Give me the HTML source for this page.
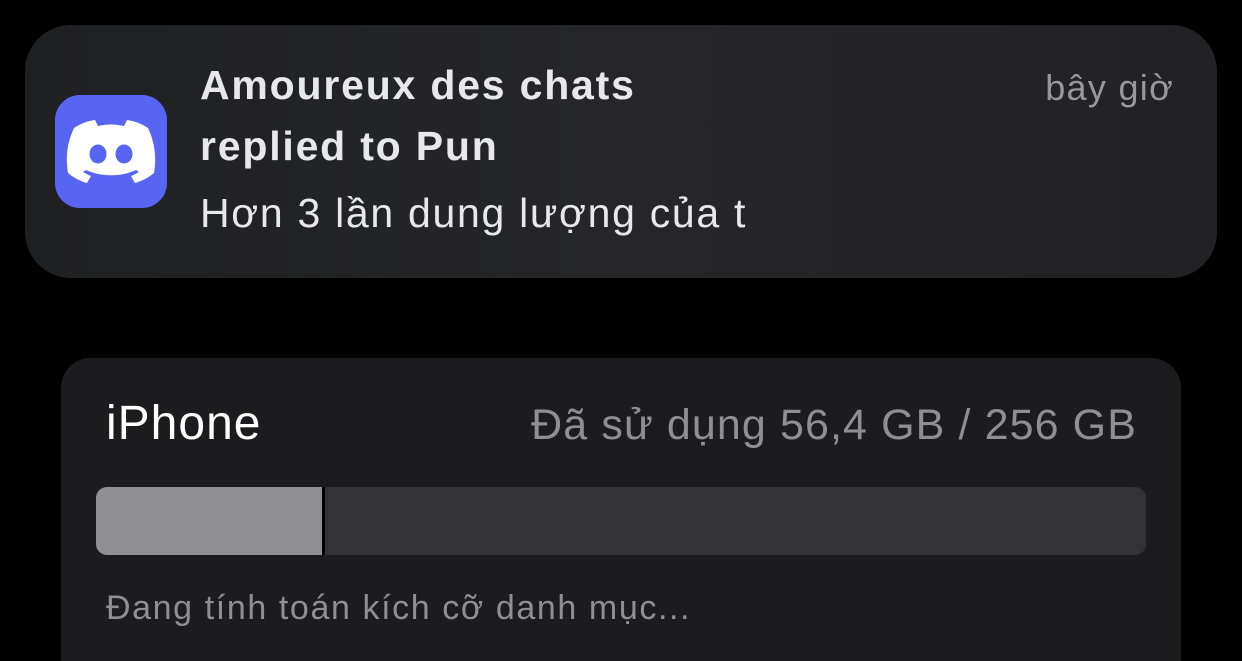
<!DOCTYPE html>
<html style="overflow:hidden"><head><meta charset="utf-8"><style>
html,body{height:661px}
body{margin:0;width:1242px;background:#000;overflow:hidden;font-family:"Liberation Sans",sans-serif;position:relative}
.n{position:absolute;left:25px;top:25px;width:1192px;height:253px;border-radius:46px;background:linear-gradient(90deg,#1f2022,#262628 50%,#222224)}
.ic{position:absolute;left:55px;top:95px;width:112px;height:113px;border-radius:25px;background:#5865f2}
.t{position:absolute;left:200px;color:#e8e8ea;white-space:nowrap}
.s{position:absolute;left:61px;top:358px;width:1120px;height:303px;border-radius:30px 30px 0 0;background:#1c1c1e}
.bar{position:absolute;left:96px;top:487px;width:1050px;height:68px;border-radius:11px;background:#333335;overflow:hidden}
</style></head><body>
<div class="n"></div>
<div class="ic"><svg width="112" height="113" viewBox="0 0 112 113"><path fill="#fff" d="M40 25 C32 26 25 29 19 33 C13 46 10 60 13 78 C19 83 25 86 32 88 L36 81 C33 80 30 78 28 77 L31 75 C46 82 66 82 81 75 L84 77 C82 78 79 80 76 81 L80 88 C87 86 93 83 99 78 C102 60 99 46 93 33 C87 29 80 26 72 25 L69 31 C60 29 52 29 43 31 Z"/><ellipse cx="43" cy="59" rx="8.5" ry="9.5" fill="#5865f2"/><ellipse cx="69" cy="59" rx="8.5" ry="9.5" fill="#5865f2"/></svg></div>
<div class="t" style="top:62px;font-weight:bold;font-size:41px;letter-spacing:1.8px">Amoureux des chats</div>
<div class="t" style="top:123px;font-weight:bold;font-size:41px;letter-spacing:1.8px">replied to Pun</div>
<div class="t" style="top:190px;font-size:41px;letter-spacing:1.7px">Hơn 3 lần dung lượng của t</div>
<div style="position:absolute;right:68px;top:67px;color:#98989c;font-size:36px;letter-spacing:1.3px">bây giờ</div>
<div class="s"></div>
<div style="position:absolute;left:106px;top:396px;color:#fff;font-size:48px;letter-spacing:1px">iPhone</div>
<div style="position:absolute;right:105px;top:401px;color:#8e8e93;font-size:43px;letter-spacing:1.1px">Đã sử dụng 56,4 GB / 256 GB</div>
<div class="bar"><div style="position:absolute;left:0;top:0;width:226px;height:68px;background:#909094"></div><div style="position:absolute;left:226px;top:0;width:3px;height:68px;background:#000"></div></div>
<div style="position:absolute;left:106px;top:589px;color:#8e8e93;font-size:34px;letter-spacing:1.6px">Đang tính toán kích cỡ danh mục...</div>
</body></html>
